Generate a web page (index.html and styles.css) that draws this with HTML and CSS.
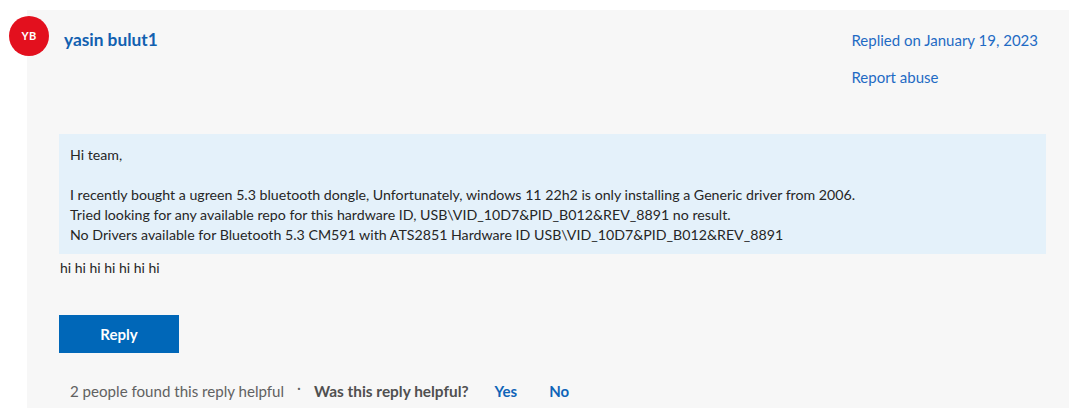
FILE: index.html
```html
<!DOCTYPE html>
<html lang="en">
<head>
<meta charset="utf-8">
<title>Reply</title>
<link rel="stylesheet" href="styles.css">
</head>
<body>
<div class="thread">
  <article class="reply">
    <div class="avatar">YB</div>
    <header class="reply-head">
      <a class="author" href="#">yasin bulut1</a>
      <div class="meta">
        <a class="meta-link" href="#">Replied on January 19, 2023</a>
        <a class="meta-link" href="#">Report abuse</a>
      </div>
    </header>
    <blockquote class="quote">
      <p>Hi team,</p>
      <p>I recently bought a ugreen 5.3 bluetooth dongle, Unfortunately, windows 11 22h2 is only installing a Generic driver from 2006.<br>Tried looking for any available repo for this hardware ID, USB\VID_10D7&amp;PID_B012&amp;REV_8891 no result.<br>No Drivers available for Bluetooth 5.3 CM591 with ATS2851 Hardware ID USB\VID_10D7&amp;PID_B012&amp;REV_8891</p>
    </blockquote>
    <p class="body-text">hi hi hi hi hi hi hi</p>
    <button class="reply-btn" type="button">Reply</button>
    <footer class="feedback">
      <span class="count">2 people found this reply helpful</span>
      <span class="sep">·</span>
      <span class="question">Was this reply helpful?</span>
      <a class="vote" href="#">Yes</a>
      <a class="vote" href="#">No</a>
    </footer>
  </article>
</div>
</body>
</html>
```
FILE: styles.css
```css
html, body {
  margin: 0;
  padding: 0;
  background: #ffffff;
}
body {
  font-family: "Segoe UI", Lato, "Liberation Sans", sans-serif;
  font-size: 14px;
  line-height: 20px;
  color: #262626;
}
.thread {
  padding: 10px 0 0 27px;
}
.reply {
  position: relative;
  background: #f7f7f7;
  height: 398px;
  box-sizing: border-box;
  padding: 20px 23px 0 32px;
  display: flex;
  flex-direction: column;
  align-items: flex-start;
}
.avatar {
  position: absolute;
  left: -18px;
  top: 6px;
  width: 40px;
  height: 40px;
  border-radius: 50%;
  background: #e3101e;
  color: #fff;
  font-weight: 700;
  font-size: 11px;
  display: flex;
  align-items: center;
  justify-content: center;
  letter-spacing: 0.2px;
}
.reply-head {
  align-self: stretch;
  display: flex;
  justify-content: space-between;
  padding-left: 5px;
}
.author {
  color: #1160b0;
  font-weight: 700;
  font-size: 17.3px;
  text-decoration: none;
}
.meta {
  display: flex;
  flex-direction: column;
  align-items: flex-start;
  gap: 17px;
  margin-right: 8px;
  font-size: 15px;
}
.meta-link {
  color: #1f6bc4;
  text-decoration: none;
}
.quote {
  align-self: stretch;
  margin: 47px 0 0 0;
  padding: 11px 11px 9px;
  background: #e4f1fa;
  font-size: 14.2px;
}
.quote p {
  margin: 0 0 20px;
}
.quote p:last-child {
  margin-bottom: 0;
}
.body-text {
  margin: 4px 0 0 1px;
}
.reply-btn {
  margin-top: 37px;
  width: 120px;
  height: 38px;
  border: 0;
  background: #0067b8;
  color: #fff;
  font-family: inherit;
  font-size: 15px;
  font-weight: 700;
  cursor: pointer;
}
.feedback {
  margin: 28px 0 0 11px;
  display: flex;
  align-items: center;
  color: #616161;
  font-size: 15px;
}
.count {
  font-size: 15.1px;
}
.sep {
  margin: 0 13px;
  position: relative;
  top: -4px;
}
.question {
  font-weight: 700;
  color: #505050;
  font-size: 15.4px;
}
.vote {
  color: #0f64b8;
  font-weight: 700;
  text-decoration: none;
  margin-left: 26px;
}
.vote + .vote {
  margin-left: 32px;
}
```
